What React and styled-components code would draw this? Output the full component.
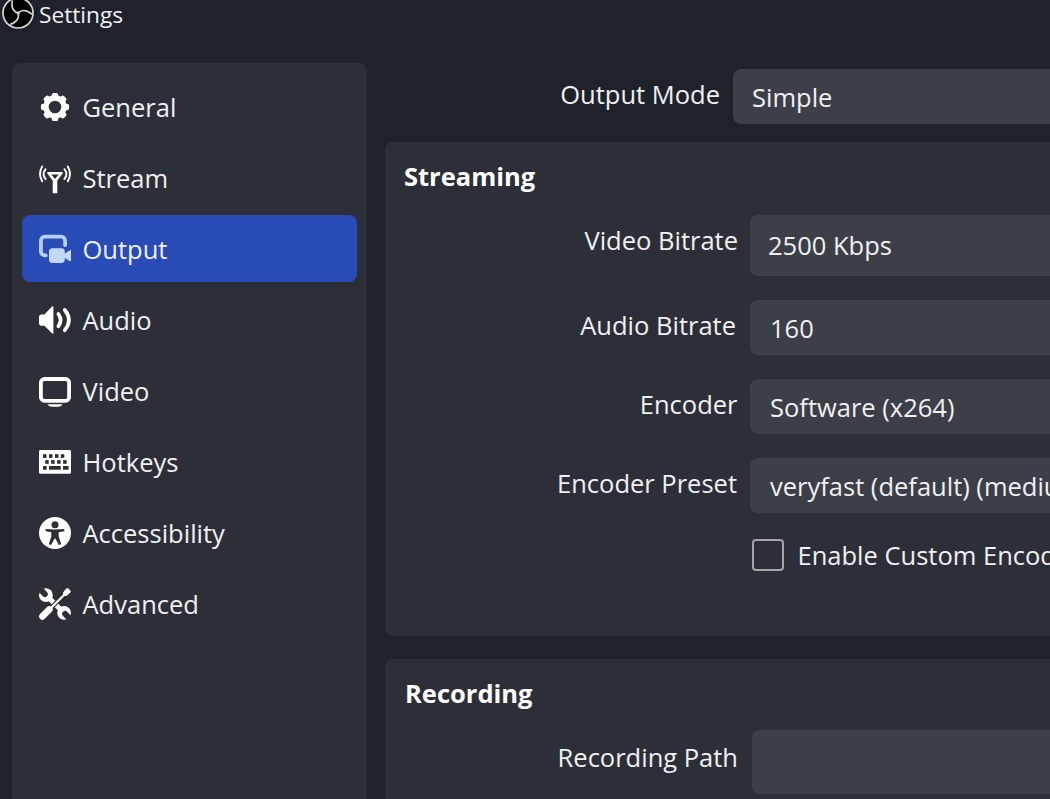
import React from "react";
import styled, { createGlobalStyle } from "styled-components";

const GlobalStyle = createGlobalStyle`
  * { box-sizing: border-box; }
  html, body { margin: 0; padding: 0; }
  body {
    width: 100vw;
    height: 100vh;
    overflow: hidden;
    background: #1f222a;
    color: #f0f0f1;
    font-family: "Open Sans", "Noto Sans", sans-serif;
    font-size: 25.5px;
    line-height: 36px;
  }
`;

const Window = styled.div`
  display: flex;
  flex-direction: column;
  height: 100vh;
  overflow: hidden;
  white-space: nowrap;
`;

const TitleBar = styled.header`
  display: flex;
  align-items: center;
  gap: 5px;
  flex: none;
  height: 30px;
  padding-left: 2px;
`;

const Logo = styled.svg`
  width: 32px;
  height: 32px;
  margin-top: -4px;
  flex: none;
`;

const WindowTitle = styled.span`
  font-size: 22.7px;
  line-height: 28px;
`;

const Body = styled.div`
  display: flex;
  flex: 1;
  min-height: 0;
  padding-left: 11.5px;
  gap: 18.5px;
`;

const Sidebar = styled.nav`
  display: flex;
  flex-direction: column;
  gap: 4px;
  flex: none;
  width: 355px;
  margin-top: 33.4px;
  padding: 10px;
  border-radius: 8px 8px 0 0;
  background: #2d2f38;
`;

const NavItem = styled.div`
  display: flex;
  align-items: center;
  gap: 11.5px;
  flex: none;
  height: 67px;
  padding-left: 17.5px;
  border-radius: 8px;
  background: ${(p) => (p.$active ? "#294bb6" : "transparent")};
`;

const NavIcon = styled.svg`
  width: 32px;
  height: 32px;
  flex: none;
  overflow: visible;
  color: #fff;
`;

const NavLabel = styled.span`
  flex: none;
`;

const Content = styled.main`
  display: flex;
  flex-direction: column;
  flex: 1;
  min-width: 0;
  padding-top: 39px;
`;

const Panel = styled.section`
  flex: none;
  height: ${(p) => p.$height}px;
  margin-top: ${(p) => p.$gap}px;
  padding-top: 16px;
  border-radius: 8px 0 0 8px;
  background: #2d2f38;
`;

const PanelTitle = styled.h2`
  margin: 0 0 ${(p) => p.$below}px;
  padding-left: ${(p) => p.$indent}px;
  font-size: 25.5px;
  line-height: 36px;
  font-weight: 700;
  color: #fff;
`;

const Row = styled.div`
  display: flex;
  align-items: center;
  flex: none;
  height: ${(p) => p.$height}px;
  margin-top: ${(p) => p.$gap || 0}px;
`;

const Label = styled.label`
  flex: none;
  width: ${(p) => p.$width}px;
  padding-bottom: ${(p) => p.$lift}px;
  text-align: right;
`;

const Field = styled.div`
  display: flex;
  align-items: center;
  flex: 1;
  min-width: 0;
  height: 100%;
  margin-left: ${(p) => p.$gap}px;
  padding-left: ${(p) => p.$inset}px;
  padding-bottom: ${(p) => p.$lift || 0}px;
  overflow: hidden;
  border-radius: 8px 0 0 8px;
  background: #3c3f48;
`;

const Checkbox = styled.span`
  flex: none;
  width: 32px;
  height: 32px;
  margin-left: 367px;
  margin-right: 13.5px;
  border: 2px solid #a5a4aa;
  border-radius: 4px;
`;

const GearIcon = () => (
  <NavIcon viewBox="0 0 32 32">
    <circle cx="16" cy="16" r="9" fill="none" stroke="currentColor" strokeWidth="5.4" />
    {[0, 45, 90, 135, 180, 225, 270, 315].map((a) => (
      <rect key={a} x="12.7" y="1.9" width="6.6" height="6" rx="2.2" fill="currentColor" transform={`rotate(${a} 16 16)`} />
    ))}
  </NavIcon>
);

const StreamIcon = () => (
  <NavIcon viewBox="0 0 32 32" fill="none" stroke="currentColor" strokeWidth="1.9" strokeLinecap="round">
    <path d="M8.3 10H23.7V11.5L18.3 18.4V31.3H13.7V18.4L8.3 11.5ZM12.3 12.6L16 17L19.7 12.6Z" fill="currentColor" fillRule="evenodd" stroke="none" />
    <path d="M6.6 7.2Q2.4 12.2 6.6 17M25.4 7.2Q29.6 12.2 25.4 17M3.2 4.6Q-1.2 12 3.2 19.2M28.8 4.6Q33.2 12 28.8 19.2" />
  </NavIcon>
);

const OutputIcon = () => (
  <NavIcon viewBox="0 0 32 32">
    <path d="M6.8 22.4H6A4.2 4.2 0 0 1 1.9 18.2V7.8A4.2 4.2 0 0 1 6 3.6H22A4.2 4.2 0 0 1 26.1 7.8V12" fill="none" stroke="#b5cffb" strokeWidth="3.8" strokeLinecap="round" />
    <rect x="10" y="15.3" width="15.8" height="14.7" rx="3.4" fill="#c3d8f7" />
    <path d="M25 21L31 17.2Q32 16.8 32 18V27.6Q32 28.7 31 28.2L25 24.6Z" fill="#c3d8f7" />
  </NavIcon>
);

const AudioIcon = () => (
  <NavIcon viewBox="0 0 32 32">
    <path d="M2 10.6H5.4L13 2.6Q14.4 1.6 14.4 3V28.8Q14.4 30.4 13 29.2L5.4 21.8H2Q0 21.4 0 19.4V13Q0 11 2 10.6Z" fill="currentColor" />
    <path d="M19.4 10Q23.8 16 19.4 22.2M25.8 6Q34 16 25.8 26.2" fill="none" stroke="currentColor" strokeWidth="3.7" strokeLinecap="round" />
  </NavIcon>
);

const VideoIcon = () => (
  <NavIcon viewBox="0 0 32 32">
    <rect x="1.9" y="4" width="28.2" height="21.8" rx="3.6" fill="none" stroke="currentColor" strokeWidth="3.8" />
    <path d="M8.3 29.3H23.7Q22 31.8 19 31.8H13Q10 31.8 8.3 29.3Z" fill="currentColor" />
  </NavIcon>
);

const keys = [
  [4, 8.2, 3.5], [10, 8.2, 3.5], [16, 8.2, 3.5], [21.8, 8.2, 3.5],
  [6.2, 14.1, 3.5], [12.1, 14.1, 3.5], [18.1, 14.1, 3.5], [24.1, 14.1, 3.5],
  [4, 20, 3.6], [10, 20, 11.8], [24, 20, 5.6],
];

const HotkeysIcon = () => (
  <NavIcon viewBox="0 0 32 32">
    <rect x="0" y="4" width="32" height="23.8" rx="1.4" fill="currentColor" />
    {keys.map(([x, y, w]) => (
      <rect key={`${x}-${y}`} x={x} y={y} width={w} height="3.7" fill="#2d2f38" />
    ))}
  </NavIcon>
);

const AccessibilityIcon = () => (
  <NavIcon viewBox="0 0 32 32">
    <circle cx="16" cy="16" r="16" fill="currentColor" />
    <g fill="#2d2f38">
      <circle cx="16" cy="7.8" r="3.5" />
      <path d="M7 12.1Q16 12.9 25 12.1Q26.2 13.2 25 14.2L19.7 15.3V19.4L22 26.6Q21.6 28.6 19.6 27.6L16.4 21.6H15.6L12.4 27.6Q10.4 28.6 10 26.6L12.3 19.4V15.3L7 14.2Q5.8 13.2 7 12.1Z" />
    </g>
  </NavIcon>
);

const AdvancedIcon = () => (
  <NavIcon viewBox="0 0 32 32">
    <path d="M9 9L23 23" stroke="currentColor" strokeWidth="5" />
    <circle cx="6.9" cy="7.2" r="6.9" fill="currentColor" />
    <circle cx="25.1" cy="24.8" r="6.9" fill="currentColor" />
    <path d="M-1 -1L5.8 6M33 33L26.2 26" stroke="#2d2f38" strokeWidth="6" strokeLinecap="round" />
    <path d="M10 22L26 6" stroke="#2d2f38" strokeWidth="4.2" />
    <path d="M3.4 28.4L10.4 21.4" stroke="currentColor" strokeWidth="6.6" strokeLinecap="round" />
    <path d="M10 22L27 5" stroke="currentColor" strokeWidth="2.2" />
    <path d="M24.6 4.4L27.6 .8Q28.6 .2 29.4 1L31 2.6Q31.8 3.6 31 4.4L27.6 7.4H24.6Z" fill="currentColor" stroke="currentColor" strokeWidth="1" strokeLinejoin="round" />
  </NavIcon>
);

const navItems = [
  { label: "General", Icon: GearIcon },
  { label: "Stream", Icon: StreamIcon },
  { label: "Output", Icon: OutputIcon, active: true },
  { label: "Audio", Icon: AudioIcon },
  { label: "Video", Icon: VideoIcon },
  { label: "Hotkeys", Icon: HotkeysIcon },
  { label: "Accessibility", Icon: AccessibilityIcon },
  { label: "Advanced", Icon: AdvancedIcon },
];

export default function App() {
  return (
    <Window>
      <GlobalStyle />
      <TitleBar>
        <Logo viewBox="0 0 32 32">
          <circle cx="16" cy="16" r="15" fill="#000" stroke="#d6d6d8" strokeWidth="1.7" />
          <g fill="none" stroke="#d6d6d8" strokeWidth="1.7">
            {[0, 120, 240].map((a) => (
              <path key={a} d="M16.2 16C12.6 15.2 8.6 11.6 10.4 3.4" transform={`rotate(${a} 16.2 16)`} />
            ))}
          </g>
          <circle cx="16.2" cy="16" r="1.5" fill="#d6d6d8" />
        </Logo>
        <WindowTitle>Settings</WindowTitle>
      </TitleBar>
      <Body>
        <Sidebar>
          {navItems.map(({ label, Icon, active }) => (
            <NavItem key={label} $active={active}>
              <Icon />
              <NavLabel>{label}</NavLabel>
            </NavItem>
          ))}
        </Sidebar>
        <Content>
          <Row $height={55}>
            <Label $width={335} $lift={5}>Output Mode</Label>
            <Field $gap={12.5} $inset={19.5}>Simple</Field>
          </Row>
          <Panel $gap={18} $height={493.5}>
            <PanelTitle $indent={19} $below={21}>Streaming</PanelTitle>
            <Row $height={61}>
              <Label $width={353} $lift={11}>Video Bitrate</Label>
              <Field $gap={12} $inset={18} $lift={1}>2500 Kbps</Field>
            </Row>
            <Row $height={55} $gap={24}>
              <Label $width={351} $lift={5}>Audio Bitrate</Label>
              <Field $gap={14} $inset={20}>160</Field>
            </Row>
            <Row $height={55} $gap={24}>
              <Label $width={352.5} $lift={5}>Encoder</Label>
              <Field $gap={12.5} $inset={20}>Software (x264)</Field>
            </Row>
            <Row $height={55} $gap={24}>
              <Label $width={352} $lift={5}>Encoder Preset</Label>
              <Field $gap={13} $inset={20}>veryfast (default) (medium CPU usage)</Field>
            </Row>
            <Row $height={32} $gap={26}>
              <Checkbox />
              <span>Enable Custom Encoder Settings</span>
            </Row>
          </Panel>
          <Panel $gap={23.5} $height={200}>
            <PanelTitle $indent={20} $below={19}>Recording</PanelTitle>
            <Row $height={64}>
              <Label $width={353} $lift={10}>Recording Path</Label>
              <Field $gap={14} $inset={20} />
            </Row>
          </Panel>
        </Content>
      </Body>
    </Window>
  );
}
